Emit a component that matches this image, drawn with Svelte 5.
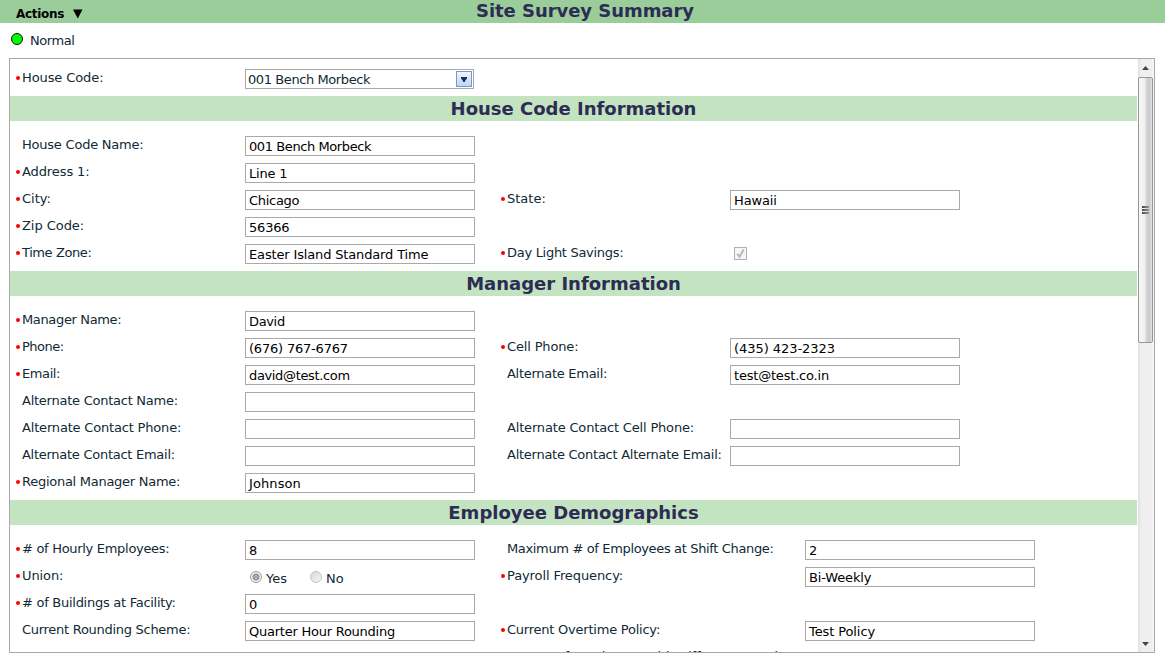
<script>
  // ls / vs: letter spacing of the label and of the value, in hundredths of a pixel
  const sections = [
    { title: 'House Code Information', rows: [
      [{ l: 'House Code Name:', ls: -22, v: '001 Bench Morbeck', vs: -41 }],
      [{ l: 'Address 1:', ls: -10, r: 1, v: 'Line 1', vs: -17 }],
      [{ l: 'City:', r: 1, v: 'Chicago', vs: -29 }, { l: 'State:', r: 1, v: 'Hawaii', vs: -15 }],
      [{ l: 'Zip Code:', ls: -5, r: 1, v: '56366', vs: -20 }],
      [{ l: 'Time Zone:', ls: -40, r: 1, v: 'Easter Island Standard Time', vs: -15 }, { l: 'Day Light Savings:', ls: -29, r: 1, kind: 'check' }]
    ] },
    { title: 'Manager Information', rows: [
      [{ l: 'Manager Name:', ls: -35, r: 1, v: 'David', vs: -35 }],
      [{ l: 'Phone:', ls: -50, r: 1, v: '(676) 767-6767', vs: -20 }, { l: 'Cell Phone:', ls: -15, r: 1, v: '(435) 423-2323', vs: -5 }],
      [{ l: 'Email:', ls: -40, r: 1, v: 'david@test.com', vs: -35 }, { l: 'Alternate Email:', ls: -28, v: 'test@test.co.in', vs: -20 }],
      [{ l: 'Alternate Contact Name:', ls: -25, v: '' }],
      [{ l: 'Alternate Contact Phone:', ls: -18, v: '' }, { l: 'Alternate Contact Cell Phone:', ls: -17, v: '' }],
      [{ l: 'Alternate Contact Email:', ls: -27, v: '' }, { l: 'Alternate Contact Alternate Email:', ls: -26, v: '' }],
      [{ l: 'Regional Manager Name:', ls: -27, r: 1, v: 'Johnson', vs: 10 }]
    ] },
    { title: 'Employee Demographics', wide: true, rows: [
      [{ l: '# of Hourly Employees:', ls: -30, r: 1, v: '8' }, { l: 'Maximum # of Employees at Shift Change:', ls: -35, v: '2' }],
      [{ l: 'Union:', ls: -10, r: 1, kind: 'radio' }, { l: 'Payroll Frequency:', ls: -10, r: 1, v: 'Bi-Weekly', vs: -15 }],
      [{ l: '# of Buildings at Facility:', ls: -27, r: 1, v: '0' }],
      [{ l: 'Current Rounding Scheme:', ls: -28, v: 'Quarter Hour Rounding', vs: -24 }, { l: 'Current Overtime Policy:', ls: -23, r: 1, v: 'Test Policy', vs: -10 }],
      [{ l: '', kind: 'none' }, { l: 'Groups of Employees with Different Awards:', ls: -12, kind: 'none' }]
    ] }
  ];
  const sp = (n) => `${(n ?? 0) / 100}px`;
</script>

<header>
  <div class="menu">Actions <svg width="10" height="10" viewBox="0 0 10 10"><path d="M0 0.5H9.5L4.8 9.5Z" /></svg></div>
  <h1>Site Survey Summary</h1>
</header>
<div class="status"><i></i><span>Normal</span></div>

<main>
  <div class="form">
    <div class="row first">
      <div class="label"><b></b><span class="code">House Code:</span></div>
      <div class="select"><span>001 Bench Morbeck</span>
        <div class="drop"><svg width="6" height="5" viewBox="0 0 6 5"><path d="M0 0H6V1.5L4 4V5H2V4L0 1.5Z" fill="#1d3350" /></svg></div>
      </div>
    </div>
    {#each sections as s}
      <h2>{s.title}</h2>
      <section class:wide={s.wide}>
        {#each s.rows as row}
          <div class="row">
            {#each row as f}
              <div class="label">{#if f.r}<b></b>{/if}<span style:letter-spacing={sp(f.ls)}>{f.l}</span></div>
              {#if f.kind === 'check'}
                <div class="check"><svg width="13" height="13" viewBox="0 0 13 13"><rect x=".5" y=".5" width="12" height="12" fill="#f6f6f6" stroke="#b1b1b1" /><path d="M3.2 6.8L5.6 9.8L9.6 2.6" fill="none" stroke="#b8b8b8" stroke-width="2" /></svg></div>
              {:else if f.kind === 'radio'}
                <div class="radios">
                  <i class="on"></i><span>Yes</span><i></i><span>No</span>
                </div>
              {:else if f.kind === 'none'}
                <div></div>
              {:else}
                <div class="field" style:letter-spacing={sp(f.vs)}>{f.v}</div>
              {/if}
            {/each}
          </div>
        {/each}
      </section>
    {/each}
  </div>
  <div class="scroll">
    <div class="arrow"><svg width="7" height="4" viewBox="0 0 7 4"><path d="M3.5 0L7 4H0Z" fill="#444" /></svg></div>
    <div class="thumb"><u></u><u></u><u></u></div>
    <div class="arrow end"><svg width="7" height="4" viewBox="0 0 7 4"><path d="M0 0H7L3.5 4Z" fill="#444" /></svg></div>
  </div>
</main>

<style>
  :global(body) { margin: 0; background: #fff; overflow: hidden; font: 13px/16px Verdana, "DejaVu Sans", sans-serif; color: #0f2a35; }
  header { height: 23px; background: #9bcd9b; display: grid; grid-template-columns: 1fr; }
  header > * { grid-area: 1 / 1; }
  .menu { padding: 7px 0 0 16px; font: bold 12px/15px "DejaVu Sans", sans-serif; color: #000; display: flex; gap: 9px; letter-spacing: -.3px; }
  .menu svg { margin-top: 2px; }
  h1, h2 { margin: 0; font: bold 18px/25px "DejaVu Sans", sans-serif; text-align: center; color: #2c2c54; white-space: nowrap; }
  h1 { line-height: 21px; padding-left: 5px; height: 23px; letter-spacing: -.05px; }
  .status { display: flex; height: 35px; padding-left: 11px; box-sizing: border-box; }
  .status i { width: 12px; height: 12px; box-sizing: border-box; border: 1px solid #111; border-radius: 50%; background: #0f0; margin: 10px 7px 0 0; }
  .status span { margin-top: 10px; letter-spacing: -.45px; }
  main { margin-left: 9px; width: 1146px; height: 595px; box-sizing: border-box; border: 1px solid #a9a9a9; display: flex; overflow: hidden; }
  .form { width: 1127px; flex: none; height: 593px; overflow: hidden; }
  h2 { background: #c4e3c1; height: 25px; }
  section { padding-top: 15px; }
  .row { display: grid; grid-template-columns: 229px 230px 255px 230px; height: 27px; padding-left: 6px; white-space: nowrap; }
  .wide .row { grid-template-columns: 229px 230px 330px 230px; }
  .first { padding-top: 10px; }
  .label { padding-left: 6px; display: flex; height: 18px; }
  .label:nth-child(3) { padding-left: 32px; }
  .label b { width: 4px; height: 4px; border-radius: 50%; background: #f00; margin: 7px 2px 0 -6px; flex: none; }
  .label span { line-height: 17px; }
  .label .code { letter-spacing: -.1px; }
  .field { box-sizing: border-box; height: 20px; border: 1px solid #a9a9a9; color: #000; padding: 1px 3px 0; line-height: 17px; }
  .select { box-sizing: border-box; width: 229px; height: 20px; border: 1px solid #a9a9a9; padding: 1px 1px 0 2px; display: flex; justify-content: space-between; line-height: 18px; letter-spacing: -.41px; }
  .drop { box-sizing: border-box; width: 16px; height: 16px; border: 1px solid #7798c8; background: linear-gradient(#f0f5fe, #bfd4f8); display: flex; align-items: center; justify-content: center; }
  .check { padding: 3px 0 0 4px; }
  .check svg { display: block; }
  .radios { display: flex; padding-left: 5px; }
  .radios i { box-sizing: border-box; width: 12px; height: 12px; border: 1px solid #c4c4c4; border-radius: 50%; background: linear-gradient(135deg, #d5d5d5, #f8f8f8); margin: 4px 4px 0 0; }
  .radios .on { border-color: #999; background: radial-gradient(circle, #aaa 0 2px, #888 3px, #f6f6f6 4px); }
  .radios span { margin-top: 3px; line-height: 17px; width: 44px; }
  .scroll { width: 17px; flex: none; box-sizing: border-box; background: linear-gradient(90deg, #fff 0 1px, #e3e3e3 1px 2px, #efefef 4px 15px, #f5f5f5 15px); display: flex; flex-direction: column; }
  .arrow { height: 18px; padding: 7px 0 0 5px; box-sizing: border-box; line-height: 0; }
  .arrow.end { margin-top: auto; height: 14px; padding-top: 4px; }
  .thumb { height: 266px; box-sizing: border-box; width: 15px; margin-left: 1px; border: 1px solid #979797; border-radius: 2px; background: linear-gradient(90deg, #f7f7f7, #efefef 45%, #d6d7da 55%, #c8c9cc 80%, #e5e5e5); display: flex; flex-direction: column; align-items: center; justify-content: center; gap: 1px; }
  .thumb u { width: 7px; height: 2px; background: linear-gradient(90deg, #444, #999); margin-right: 1px; }
</style>
